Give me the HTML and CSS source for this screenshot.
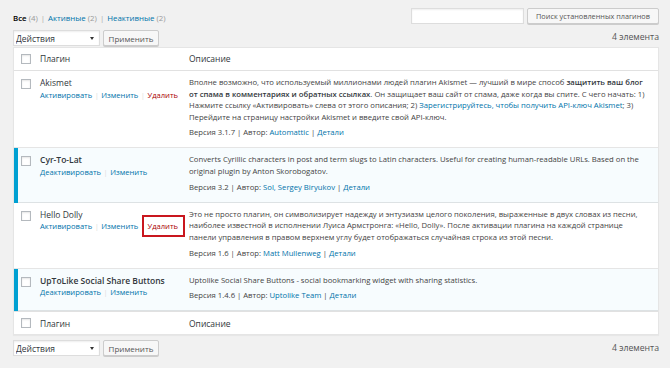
FILE: index.html
```html
<!DOCTYPE html>
<html lang="ru">
<head>
    <meta charset="UTF-8">
    <title>Плагины</title>
    <link rel="stylesheet" href="styles.css">
</head>
<body>

<div class="top-row">
    <ul class="subsubsub">
        <li><a class="current" href="#">Все <span class="count">(4)</span></a> <span class="sep">|</span></li>
        <li><a href="#">Активные <span class="count">(2)</span></a> <span class="sep">|</span></li>
        <li><a href="#">Неактивные <span class="count">(2)</span></a></li>
    </ul>
    <form class="search-box">
        <input type="search" class="search-input">
        <button type="button" class="button">Поиск установленных плагинов</button>
    </form>
</div>

<div class="tablenav">
    <div class="actions">
        <div class="select-wrap">
            <select class="bulk-select">
                <option>Действия</option>
            </select>
        </div>
        <button type="button" class="button apply">Применить</button>
    </div>
    <span class="displaying-num">4 элемента</span>
</div>

<table class="plugins">
    <colgroup>
        <col class="col-check">
        <col class="col-name">
        <col>
    </colgroup>
    <thead>
        <tr>
            <td class="check-column"><input type="checkbox"></td>
            <th class="column-name">Плагин</th>
            <th class="column-description">Описание</th>
        </tr>
    </thead>
    <tbody>
        <tr class="inactive">
            <th class="check-column"><input type="checkbox"></th>
            <td class="plugin-title">
                <strong>Akismet</strong>
                <div class="row-actions">
                    <a href="#">Активировать</a><span class="sep">|</span><a href="#">Изменить</a><span class="sep">|</span><a class="delete" href="#">Удалить</a>
                </div>
            </td>
            <td class="column-description">
                <p>Вполне возможно, что используемый миллионами людей плагин Akismet — лучший в мире способ <strong>защитить ваш блог</strong> <strong>от спама в комментариях и обратных ссылках</strong>. Он защищает ваш сайт от спама, даже когда вы спите. С чего начать: 1) Нажмите ссылку «Активировать» слева от этого описания; 2) <a href="#">Зарегистрируйтесь, чтобы получить API-ключ Akismet</a>; 3) Перейдите на страницу настройки Akismet и введите свой API-ключ.</p>
                <div class="plugin-version">Версия 3.1.7 | Автор: <a href="#">Automattic</a> | <a href="#">Детали</a></div>
            </td>
        </tr>
        <tr class="active">
            <th class="check-column"><input type="checkbox"></th>
            <td class="plugin-title">
                <strong>Cyr-To-Lat</strong>
                <div class="row-actions">
                    <a href="#">Деактивировать</a><span class="sep">|</span><a href="#">Изменить</a>
                </div>
            </td>
            <td class="column-description">
                <p>Converts Cyrillic characters in post and term slugs to Latin characters. Useful for creating human-readable URLs. Based on the original plugin by Anton Skorobogatov.</p>
                <div class="plugin-version">Версия 3.2 | Автор: <a href="#">Sol, Sergey Biryukov</a> | <a href="#">Детали</a></div>
            </td>
        </tr>
        <tr class="inactive">
            <th class="check-column"><input type="checkbox"></th>
            <td class="plugin-title">
                <strong>Hello Dolly</strong>
                <div class="row-actions">
                    <a href="#">Активировать</a><span class="sep">|</span><a href="#">Изменить</a><span class="sep">|</span><a class="delete marked" href="#">Удалить</a>
                </div>
            </td>
            <td class="column-description">
                <p>Это не просто плагин, он символизирует надежду и энтузиазм целого поколения, выраженные в двух словах из песни, наиболее известной в исполнении Луиса Армстронга: «Hello, Dolly». После активации плагина на каждой странице панели управления в правом верхнем углу будет отображаться случайная строка из этой песни.</p>
                <div class="plugin-version">Версия 1.6 | Автор: <a href="#">Matt Mullenweg</a> | <a href="#">Детали</a></div>
            </td>
        </tr>
        <tr class="active">
            <th class="check-column"><input type="checkbox"></th>
            <td class="plugin-title">
                <strong>UpToLike Social Share Buttons</strong>
                <div class="row-actions">
                    <a href="#">Деактивировать</a><span class="sep">|</span><a href="#">Изменить</a>
                </div>
            </td>
            <td class="column-description">
                <p>Uptolike Social Share Buttons - social bookmarking widget with sharing statistics.</p>
                <div class="plugin-version">Версия 1.4.6 | Автор: <a href="#">Uptolike Team</a> | <a href="#">Детали</a></div>
            </td>
        </tr>
    </tbody>
    <tfoot>
        <tr>
            <td class="check-column"><input type="checkbox"></td>
            <th class="column-name">Плагин</th>
            <th class="column-description">Описание</th>
        </tr>
    </tfoot>
</table>

<div class="tablenav bottom">
    <div class="actions">
        <div class="select-wrap">
            <select class="bulk-select">
                <option>Действия</option>
            </select>
        </div>
        <button type="button" class="button apply">Применить</button>
    </div>
    <span class="displaying-num">4 элемента</span>
</div>

</body>
</html>
```

FILE: styles.css
```css
body {
    font-family: "Open Sans", sans-serif;
    font-size: 7.7px;
    line-height: 11.6px;
    color: #444;
    background-color: #f1f1f1;
    margin: 0;
    padding: 8px 11px 0 13px;
}
a {
    color: #0073aa;
    text-decoration: none;
}
.top-row {
    display: flex;
    justify-content: space-between;
    align-items: flex-end;
    height: 16px;
}
.subsubsub {
    list-style: none;
    margin: 0;
    padding: 0;
    display: flex;
    font-size: 7.85px;
    line-height: 12px;
    color: #666;
}
.subsubsub li {
    margin-right: 3px;
}
.subsubsub .current {
    color: #000;
    font-weight: 600;
}
.subsubsub .count {
    color: #999;
    font-weight: normal;
}
.subsubsub .sep {
    color: #aaa;
    margin-left: 1px;
}
.search-box {
    display: flex;
    margin: 0;
}
.search-input {
    width: 113px;
    height: 16px;
    box-sizing: border-box;
    border: 1px solid #ddd;
    background: #fff;
    box-shadow: inset 0 1px 2px rgba(0, 0, 0, 0.07);
    margin: 0 3px 0 0;
    padding: 0;
}
.button {
    height: 16px;
    box-sizing: border-box;
    padding: 0 4px;
    font-family: "Open Sans", sans-serif;
    font-size: 8px;
    white-space: nowrap;
    color: #555;
    background: #f7f7f7;
    border: 1px solid #ccc;
    border-radius: 2px;
    box-shadow: 0 1px 0 #ccc;
    cursor: pointer;
}
.search-box .button {
    width: 132px;
    font-size: 7.3px;
}
.tablenav {
    display: flex;
    justify-content: space-between;
    align-items: center;
    height: 16px;
    margin: 6px 0 1px;
}
.tablenav.bottom {
    margin-top: 5px;
}
.actions {
    display: flex;
    align-items: center;
}
.select-wrap {
    position: relative;
    margin-right: 3px;
}
.select-wrap::after {
    content: "";
    position: absolute;
    right: 6px;
    top: 7px;
    border-left: 2px solid transparent;
    border-right: 2px solid transparent;
    border-top: 3px solid #333;
}
.bulk-select {
    appearance: none;
    -webkit-appearance: none;
    display: block;
    width: 87px;
    height: 16px;
    box-sizing: border-box;
    margin: 0;
    padding: 0 2px;
    border: 1px solid #ddd;
    border-radius: 0;
    background: #fff;
    box-shadow: inset 0 1px 2px rgba(0, 0, 0, 0.07);
    font-family: "Open Sans", sans-serif;
    font-size: 8.5px;
    color: #32373c;
}
.apply {
    width: 56px;
}
.displaying-num {
    font-size: 8.7px;
    color: #555;
}
.plugins {
    width: 100%;
    table-layout: fixed;
    border-collapse: separate;
    border-spacing: 0;
    background: #fff;
    border: 1px solid #e5e5e5;
    box-shadow: 0 1px 1px rgba(0, 0, 0, 0.04);
}
.col-check {
    width: 26px;
}
.col-name {
    width: 149px;
}
.plugins th,
.plugins td {
    text-align: left;
    vertical-align: top;
    font-weight: normal;
}
.plugins thead th,
.plugins thead td,
.plugins tfoot th,
.plugins tfoot td {
    height: 22px;
    padding: 0;
    vertical-align: middle;
    font-size: 8.5px;
    color: #32373c;
}
.plugins thead th,
.plugins thead td {
    border-bottom: 1px solid #e1e1e1;
}
.plugins tfoot th,
.plugins tfoot td {
    border-top: 1px solid #e1e1e1;
}
.plugins .check-column {
    padding: 0 0 0 7px;
}
.plugins tbody td,
.plugins tbody th {
    box-shadow: inset 0 -1px 0 rgba(0, 0, 0, 0.1);
}
.plugins tbody .check-column {
    padding-top: 8px;
}
.plugins tbody tr.active td,
.plugins tbody tr.active th {
    background: #f7fcfe;
}
.plugins tbody tr.active .check-column {
    border-left: 4px solid #00a0d2;
    padding-left: 3px;
}
input[type="checkbox"] {
    appearance: none;
    -webkit-appearance: none;
    display: block;
    width: 10px;
    height: 10px;
    margin: 0;
    border: 1px solid #b4b9be;
    background: #fff;
    box-shadow: inset 0 1px 2px rgba(0, 0, 0, 0.1);
    box-sizing: border-box;
}
.plugin-title {
    padding: 6px 6px 9px 0;
}
.plugin-title strong {
    display: block;
    font-size: 8.5px;
    font-weight: normal;
    color: #32373c;
}
.active .plugin-title strong {
    font-weight: 600;
}
.row-actions {
    padding-top: 1px;
    font-size: 7.6px;
    white-space: nowrap;
}
.row-actions .sep {
    color: #ddd;
    margin: 0 2.5px;
}
.row-actions .delete {
    color: #a00;
}
.row-actions .marked {
    position: relative;
}
.row-actions .marked::after {
    content: "";
    position: absolute;
    left: -5px;
    right: -7px;
    top: -6px;
    bottom: -6px;
    border: 2px solid #c9171e;
}
.column-description {
    padding: 6px 6px 9.5px 0;
}
.column-description p {
    margin: 0;
}
.column-description p strong {
    font-weight: 600;
    color: #32373c;
}
.plugin-version {
    margin-top: 4px;
}
```
